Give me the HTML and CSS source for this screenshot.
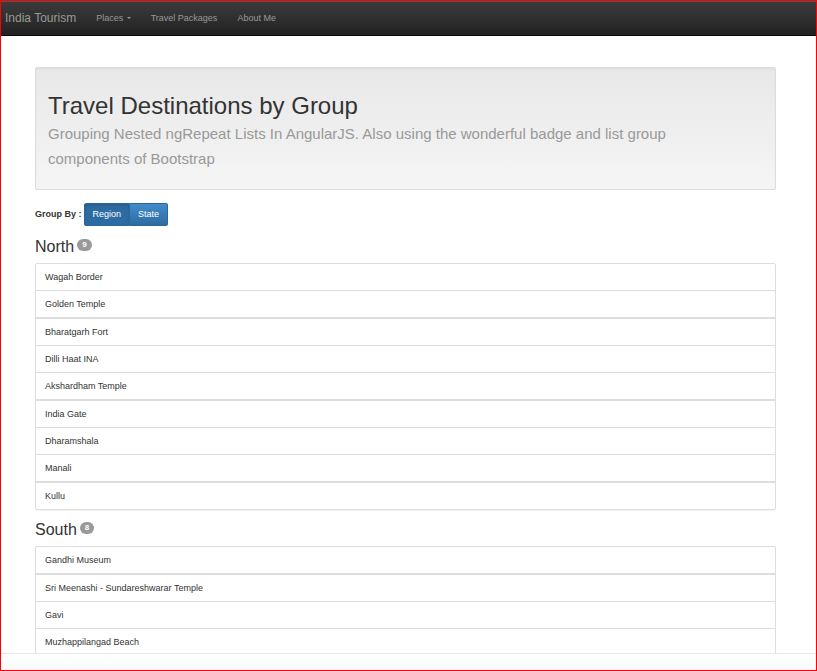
FILE: index.html
```html
<!DOCTYPE html>
<html lang="en">
<head>
<meta charset="utf-8">
<title>India Tourism</title>
<link rel="stylesheet" href="styles.css">
</head>
<body>
<header class="navbar">
  <a class="brand" href="#">India Tourism</a>
  <nav class="nav">
    <a href="#">Places <span class="caret"></span></a>
    <a href="#">Travel Packages</a>
    <a href="#">About Me</a>
  </nav>
</header>
<main class="content">
  <section class="hero">
    <h1>Travel Destinations by Group</h1>
    <p>Grouping Nested ngRepeat Lists In AngularJS. Also using the wonderful badge and list group components of Bootstrap</p>
  </section>
  <div class="group-by">
    <span class="group-label" id="group-label">Group By :</span>
    <div class="btn-group" role="group" aria-labelledby="group-label">
      <button type="button" class="btn active">Region</button>
      <button type="button" class="btn">State</button>
    </div>
  </div>
  <h2 class="region">North <span class="badge">9</span></h2>
  <ul class="list north">
    <li>Wagah Border</li>
    <li>Golden Temple</li>
    <li>Bharatgarh Fort</li>
    <li>Dilli Haat INA</li>
    <li>Akshardham Temple</li>
    <li>India Gate</li>
    <li>Dharamshala</li>
    <li>Manali</li>
    <li>Kullu</li>
  </ul>
  <h2 class="region">South <span class="badge">8</span></h2>
  <ul class="list south">
    <li>Gandhi Museum</li>
    <li>Sri Meenashi - Sundareshwarar Temple</li>
    <li>Gavi</li>
    <li>Muzhappilangad Beach</li>
  </ul>
</main>
<footer class="bottom-bar"></footer>
</body>
</html>
```
FILE: styles.css
```css
* {
  box-sizing: border-box;
}

body {
  margin: 0;
  height: 100vh;
  display: flex;
  flex-direction: column;
  overflow: hidden;
  border: 1px solid #f00;
  background: #fff;
  color: #333;
  font: 9px/13px "Liberation Sans", Arial, sans-serif;
}

.navbar {
  flex: none;
  display: flex;
  align-items: center;
  height: 35px;
  padding: 0 4px;
  border-bottom: 1px solid #080808;
  background: linear-gradient(#3c3c3c, #222);
  box-shadow: inset 0 1px 0 #555;
}

.navbar a {
  color: #999;
  text-decoration: none;
}

.brand {
  font-size: 12px;
}

.nav {
  display: flex;
  gap: 20px;
  margin-left: 20px;
}

.caret {
  display: inline-block;
  margin-left: 1px;
  vertical-align: middle;
  border: 2px solid transparent;
  border-top-color: currentColor;
  border-bottom: 0;
}

.content {
  flex: 1;
  min-height: 0;
  overflow: hidden;
  padding: 31px 40px 0 34px;
}

.hero {
  padding: 23px 12px 18px;
  border: 1px solid #dcdcdc;
  border-radius: 2px;
  background: linear-gradient(#e8e8e8, #f5f5f5);
  box-shadow: inset 0 1px 2px rgba(0, 0, 0, 0.05);
}

.hero h1 {
  margin: 0;
  font-size: 24px;
  line-height: 30px;
  font-weight: 400;
}

.hero p {
  margin: 0;
  padding-right: 40px;
  color: #999;
  font-size: 15px;
  line-height: 25px;
}

.group-by {
  display: flex;
  align-items: center;
  gap: 2px;
  margin-top: 13px;
  padding-bottom: 1px;
}

.group-label {
  font-weight: 700;
}

.btn-group {
  display: flex;
}

.btn {
  height: 23px;
  margin: 0;
  padding: 0 8px;
  border: 1px solid #2b669a;
  border-radius: 0 2px 2px 0;
  background: linear-gradient(#428bca, #2d6ca2);
  color: #fff;
  font: inherit;
}

.btn + .btn {
  border-left: 0;
}

.btn.active {
  border-radius: 2px 0 0 2px;
  background: #2d6ca2;
  box-shadow: inset 0 2px 3px rgba(0, 0, 0, 0.13);
}

.region {
  display: flex;
  gap: 3px;
  margin: 11px 0 7px;
  font-size: 16px;
  line-height: 18px;
  font-weight: 400;
}

.badge {
  height: 12px;
  margin-top: 1px;
  padding: 0 5px;
  border-radius: 6px;
  background: #999;
  color: #fff;
  font-size: 8px;
  line-height: 12px;
  font-weight: 700;
}

.list {
  margin: 0;
  padding: 0;
  list-style: none;
  border: 1px solid #ddd;
  border-radius: 2px;
  box-shadow: 0 1px 1px rgba(0, 0, 0, 0.05);
}

.list li {
  padding: 7px 9px 6px;
  border-bottom: 1px solid #ddd;
}

.north li:nth-child(3n + 2),
.south li:nth-child(3n + 1) {
  border-bottom-width: 2px;
}

.north li:last-child {
  border-bottom: 0;
}

.bottom-bar {
  flex: none;
  height: 17px;
  border-top: 1px solid #e7e7e7;
  background: linear-gradient(#fff, #fafafa);
}
```
